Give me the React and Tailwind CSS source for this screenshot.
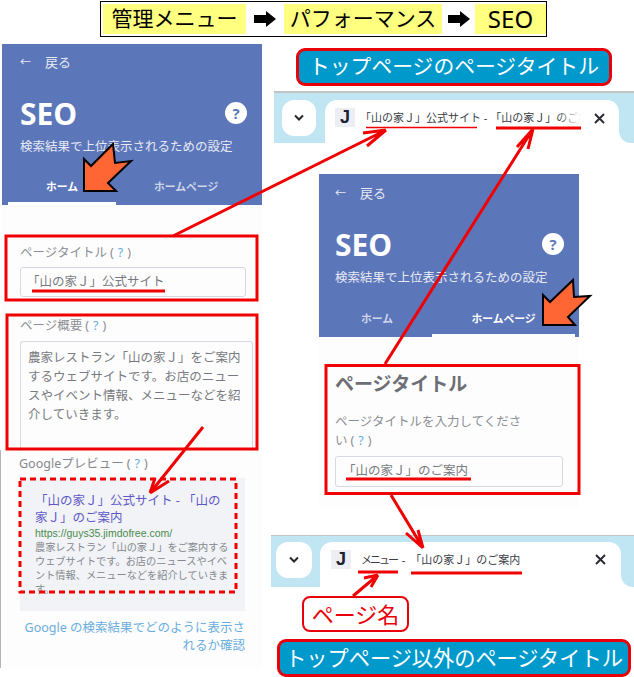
import React from "react";

const Q = () => (
  <span className="ml-[3px]">
    (<span className="mx-[4px] text-[#5fb0e6]">?</span>)
  </span>
);

function Header({ activeFirst, className, padClass, tabsClass, firstClass, secondClass }) {
  return (
    <div className={"flex flex-col bg-[#5c76ba] text-white " + className}>
      <div className={"flex h-[37px] items-center gap-[14px] text-[13px] text-[#e6eaf5] " + padClass}>
        <span className="text-[11px]">←</span>
        <span>戻る</span>
      </div>
      <div className={"mt-[9px] flex h-[46px] items-center justify-between pr-[15px] " + padClass}>
        <span className="font-['Open_Sans',sans-serif] text-[30px] font-bold">SEO</span>
        <span className="flex h-[22px] w-[22px] items-center justify-center rounded-full bg-white font-['Open_Sans',sans-serif] text-[15px] font-bold text-[#5c76ba]">?</span>
      </div>
      <div className={"mt-[1px] text-[12.5px] leading-[20px] text-[#e6eaf5] whitespace-nowrap " + padClass}>検索結果で上位表示されるための設定</div>
      <div className={"mt-auto flex h-[34px] text-[10.8px] font-bold " + tabsClass}>
        <div className={"flex items-center justify-center pt-[1px] border-b-[3px] " + firstClass + (activeFirst ? " border-white text-white" : " border-transparent text-[#cdd5ea]")}>ホーム</div>
        <div className={"flex items-center justify-center pt-[1px] border-b-[3px] " + secondClass + (activeFirst ? " border-transparent text-[#cdd5ea]" : " border-white text-white")}>ホームページ</div>
      </div>
    </div>
  );
}

function BrowserTab({ className, barClass, buttonClass, tabClass, closeClass, children }) {
  return (
    <div className={"absolute border-[#c4c4c4] bg-white " + className}>
      <div className={"flex w-full items-start bg-[#c0e6f4] " + barClass}>
        <div className={"flex h-[36px] items-center justify-center rounded-[12px] bg-white text-[#27272f] " + buttonClass}>
          <svg width="12" height="8" viewBox="0 0 12 8" fill="none" stroke="currentColor" strokeWidth="2"><path d="M2 1.5 L6 5.5 L10 1.5" /></svg>
        </div>
        <div className={"relative flex h-full items-start rounded-t-[12px] bg-white pt-[8px] " + tabClass}>
          <div className="absolute bottom-0 right-[-12px] h-[12px] w-[12px] bg-white">
            <div className="h-full w-full rounded-bl-[12px] bg-[#c0e6f4]" />
          </div>
          <div className="flex h-[19px] w-[20px] flex-none items-center justify-center bg-[#eceef3] font-['Liberation_Sans',sans-serif] text-[18px] font-bold text-[#1c2233]">J</div>
          {children}
          <svg className={"flex-none " + closeClass} width="11" height="11" viewBox="0 0 11 11" fill="none" stroke="#2b2b33" strokeWidth="2"><path d="M1 1 L10 10 M10 1 L1 10" /></svg>
        </div>
      </div>
    </div>
  );
}

function Caption({ className, children }) {
  return (
    <div className={"absolute flex items-center justify-center rounded-[9px] border-[3px] border-[#e8000b] bg-[#0099cc] text-white whitespace-nowrap " + className}>{children}</div>
  );
}

const Yellow = ({ className, children }) => (
  <span className={"flex h-[30px] items-center justify-center bg-[#ffff80] text-black " + className}>{children}</span>
);
const Arrow = () => (
  <svg width="22" height="16" viewBox="0 0 22 16" className="flex-none"><path d="M0 4 H12 V0 L22 8 L12 16 V12 H0 Z" fill="#000" /></svg>
);

export default function App() {
  return (
    <div className="relative h-[677px] w-[634px] overflow-hidden bg-white font-['Noto_Sans','Noto_Sans_CJK_JP',sans-serif]">
      {/* top banner */}
      <div className="absolute left-[100px] top-[1px] flex h-[36px] w-[447px] items-center border border-black pl-[2px] text-[21px]">
        <Yellow className="w-[143px]">管理メニュー</Yellow>
        <span className="flex w-[38px] justify-center"><Arrow /></span>
        <Yellow className="w-[158px]">パフォーマンス</Yellow>
        <span className="flex w-[33px] justify-center"><Arrow /></span>
        <Yellow className="flex-1 text-[24px]">SEO</Yellow>
      </div>

      {/* left panel */}
      <div className="absolute left-[2px] top-[44px] h-[624px] w-[260px] bg-[#fdfdfd] text-[#8b8e94]">
        <Header activeFirst className="h-[161px]" padClass="pl-[18px]" tabsClass="px-[6px]" firstClass="w-[109px]" secondClass="w-[141px]" />
        <div className="pl-[18px] pr-[9px] text-[12.5px]">
          <div className="mt-[38px] leading-[20px]">ページタイトル<Q /></div>
          <div className="mt-[4px] flex h-[30px] w-[226px] items-center rounded-[3px] border border-[#d5d9e2] pl-[6px] text-[#777a80]">「山の家Ｊ」公式サイト</div>
          <div className="mt-[19px] leading-[20px]">ページ概要<Q /></div>
          <div className="mt-[5px] h-[110px] w-[233px] rounded-t-[3px] border border-b-0 border-[#d5d9e2] px-[7px] pt-[6px] leading-[19px] text-[#777a80]">農家レストラン「山の家Ｊ」をご案内するウェブサイトです。お店のニュースやイベント情報、メニューなどを紹介していきます。</div>
          <div className="mt-[3px] ml-[-1px] leading-[20px] text-[#85888e]">Googleプレビュー<Q /></div>
          <div className="mt-[4px] h-[133px] w-[225px] bg-[#f1f3f6] pl-[15px] pr-[15px] pt-[14px]">
            <div className="text-[12.5px] leading-[17px] text-[#5f58c9]">「山の家Ｊ」公式サイト - 「山の家Ｊ」のご案内</div>
            <div className="font-['Liberation_Sans',sans-serif] text-[10.5px] leading-[14px] text-[#4b8a4b]">https://guys35.jimdofree.com/</div>
            <div className="text-[10.2px] leading-[14px] text-[#85888e]">農家レストラン「山の家Ｊ」をご案内するウェブサイトです。お店のニュースやイベント情報、メニューなどを紹介していきます。</div>
          </div>
          <div className="mt-[8px] ml-[4px] w-[221px] text-right leading-[18px] text-[#6aaee0]">Google の検索結果でどのように表示されるか確認</div>
        </div>
      </div>
      <div className="absolute left-0 top-[450px] h-[218px] w-px bg-[#b5b5b5]" />

      {/* right panel */}
      <div className="absolute left-[319px] top-[174px] h-[334px] w-[260px] bg-[#fdfdfd] text-[#8b8e94]">
        <Header className="h-[163px] pt-[1px]" padClass="pl-[16px]" tabsClass="px-[3px]" firstClass="w-[110px]" secondClass="w-[143px]" />
        <div className="pl-[16px] text-[12.5px]">
          <div className="mt-[33px] text-[19px] font-bold leading-[28px] text-[#6c6f75]">ページタイトル</div>
          <div className="mt-[14px] leading-[19px]">
            <div>ページタイトルを入力してくださ</div>
            <div>い<Q /></div>
          </div>
          <div className="mt-[6px] flex h-[31px] w-[228px] items-center rounded-[3px] border border-[#d5d9e2] pl-[7px] text-[#777a80]">「山の家Ｊ」のご案内</div>
        </div>
      </div>

      <Caption className="left-[296px] top-[48px] h-[38px] w-[316px] text-[20.8px]">トップページのページタイトル</Caption>
      <Caption className="left-[277px] top-[639px] h-[38px] w-[354px] text-[21.2px]">トップページ以外のページタイトル</Caption>

      <BrowserTab className="left-[274px] top-[91px] w-[360px] border-t-2" barClass="h-[50px] pt-[7px]" buttonClass="ml-[8px] w-[34px]" tabClass="ml-[9px] w-[294px] pl-[10px]" closeClass="ml-[13px] mt-[5px]">
        <div className="relative ml-[5px] w-[221px] overflow-hidden whitespace-nowrap text-[11px] leading-[20px] text-[#3a3c44]">
          「山の家Ｊ」公式サイト - 「山の家Ｊ」のご案内
          <div className="absolute right-0 top-0 h-full w-[24px] bg-gradient-to-r from-transparent to-white" />
        </div>
      </BrowserTab>
      <BrowserTab className="left-[271px] top-[535px] w-[363px] border-t" barClass="h-[51px] pt-[6px]" buttonClass="ml-[5px] w-[36px]" tabClass="ml-[8px] w-[301px] pl-[11px]" closeClass="ml-[74px] mt-[4px]">
        <div className="ml-[10px] w-[160px] whitespace-nowrap text-[11px] leading-[20px] text-[#3a3c44]"><span className="tracking-[-2px]">メニュー</span><span className="mx-[2px]"> - </span>「山の家Ｊ」のご案内</div>
      </BrowserTab>

      <div className="absolute left-[302px] top-[596px] flex h-[36px] w-[107px] items-center justify-center rounded-[8px] border-[2.5px] border-[#e8000b] bg-white text-[22px] text-[#e8000b]">ページ名</div>

      {/* annotations */}
      <svg className="pointer-events-none absolute left-0 top-0" width="634" height="677" viewBox="0 0 634 677" fill="none">
        <g stroke="#f00000" strokeWidth="3">
          <rect x="6" y="236" width="251" height="64" />
          <rect x="7" y="315" width="250" height="134" />
          <rect x="326" y="365.5" width="253" height="128" />
          <rect x="20" y="479" width="216" height="113" strokeDasharray="6 4" />
          <path d="M173 236 L386 130 M363 133 L386 130 M367 146 L386 130" />
          <path d="M385 364 L533 129 M517 147 L533 129 M528 149 L533 129" />
          <path d="M391 495 L423 548 M406 533 L423 548 M418 530 L423 548" />
          <path d="M203 427 L150 493 M155 478 L150 493 M169 481 L150 493" />
          <path d="M353 596 L378 575 M364 578 L378 575 M371 587 L378 575" />
          <path d="M32 291 H165 M346 479 H471 M496 128 H581 M358 572 H398 M411 573 H522" />
          <path d="M366 127.5 H477" strokeWidth="1.5" />
        </g>
        <path d="M84 191 V159 L91 166 L113 144 L115 163 L131 161 L108 183 L116 191 Z" fill="#ff6633" stroke="#000" strokeWidth="2" />
        <path d="M543 325 V295 L550 302 L573 280 L574 297 L590 296 L568 317 L575 325 Z" fill="#ff6633" stroke="#000" strokeWidth="2" />
      </svg>
    </div>
  );
}
